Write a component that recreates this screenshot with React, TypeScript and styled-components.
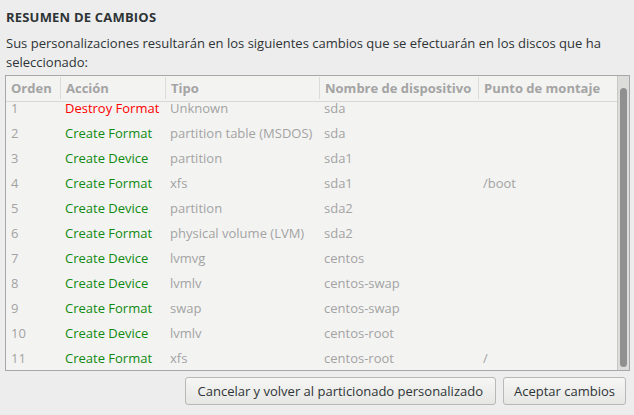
import styled, { createGlobalStyle } from "styled-components";

const GlobalStyle = createGlobalStyle`
  html, body {
    margin: 0;
    padding: 0;
    background: #ededed;
  }
  body {
    font-family: "Open Sans", "DejaVu Sans", sans-serif;
    font-size: 13px;
    color: #2e3436;
  }
`;

const Page = styled.div`
  width: 634px;
  height: 415px;
  box-sizing: border-box;
  padding: 9px 4px 0 5px;
  display: flex;
  flex-direction: column;
`;

const Title = styled.h1`
  margin: 0 0 0 1px;
  font-size: 13px;
  font-weight: 700;
  line-height: 16px;
  letter-spacing: 0.2px;
`;

const Intro = styled.p`
  margin: 9px 0 3px 1px;
  line-height: 19px;
`;

const Panel = styled.div`
  height: 294px;
  display: flex;
  border: 1px solid #a8a8a8;
  background: #f3f3f2;
`;

const TableArea = styled.div`
  flex: 1;
  display: flex;
  flex-direction: column;
  min-width: 0;
`;

const Columns = styled.div`
  display: grid;
  grid-template-columns: 54px 105px 154px 159px 1fr;
`;

const HeaderRow = styled(Columns)`
  height: 25px;
  border-bottom: 1px solid #d8d8d6;
  position: relative;
  z-index: 1;
  background: #f3f3f2;
`;

const HeadCell = styled.div<{ $first?: boolean }>`
  display: flex;
  align-items: center;
  padding-left: 5px;
  margin: 1px 0 2px;
  border-left: ${(p) => (p.$first ? "none" : "1px solid #dcdcda")};
  font-weight: 700;
  color: #a4a4a4;
  white-space: nowrap;
`;

const Body = styled.div`
  flex: 1;
  overflow: hidden;
`;

const Rows = styled.div`
  margin-top: -7px;
`;

const Row = styled(Columns)`
  height: 25px;
`;

const Cell = styled.div<{ $tone?: "red" | "green" }>`
  display: flex;
  align-items: center;
  padding-left: 5px;
  white-space: nowrap;
  color: ${(p) =>
    p.$tone === "red" ? "#ff0000" : p.$tone === "green" ? "#108a10" : "#a3a3a3"};
`;

const Track = styled.div`
  width: 12px;
  border-left: 1px solid #c8c8c6;
  background: #dcdcda;
  padding: 12px 2px 3px 2px;
  box-sizing: border-box;
  display: flex;
`;

const Thumb = styled.div`
  flex: 1;
  border-radius: 4px;
  background: #909090;
`;

const Actions = styled.div`
  display: flex;
  justify-content: flex-end;
  gap: 7px;
  padding: 6px 4px 0 0;
`;

const Button = styled.button<{ $pad?: number }>`
  height: 28px;
  padding: 0 ${(p) => p.$pad ?? 12}px;
  border: 1px solid #b8b8b6;
  border-radius: 3px;
  background: linear-gradient(#f6f6f5, #e6e6e4);
  font-family: inherit;
  font-size: 13px;
  color: #2e3436;
`;

const rows: [string, string, string, string, string][] = [
  ["1", "Destroy Format", "Unknown", "sda", ""],
  ["2", "Create Format", "partition table (MSDOS)", "sda", ""],
  ["3", "Create Device", "partition", "sda1", ""],
  ["4", "Create Format", "xfs", "sda1", "/boot"],
  ["5", "Create Device", "partition", "sda2", ""],
  ["6", "Create Format", "physical volume (LVM)", "sda2", ""],
  ["7", "Create Device", "lvmvg", "centos", ""],
  ["8", "Create Device", "lvmlv", "centos-swap", ""],
  ["9", "Create Format", "swap", "centos-swap", ""],
  ["10", "Create Device", "lvmlv", "centos-root", ""],
  ["11", "Create Format", "xfs", "centos-root", "/"],
];

export default function App() {
  return (
    <Page>
      <GlobalStyle />
      <Title>RESUMEN DE CAMBIOS</Title>
      <Intro>
        Sus personalizaciones resultarán en los siguientes cambios que se
        efectuarán en los discos que ha seleccionado:
      </Intro>
      <Panel>
        <TableArea>
          <HeaderRow>
            <HeadCell $first>Orden</HeadCell>
            <HeadCell>Acción</HeadCell>
            <HeadCell>Tipo</HeadCell>
            <HeadCell>Nombre de dispositivo</HeadCell>
            <HeadCell>Punto de montaje</HeadCell>
          </HeaderRow>
          <Body>
            <Rows>
              {rows.map(([n, action, type, dev, mount]) => (
                <Row key={n}>
                  <Cell>{n}</Cell>
                  <Cell $tone={action.startsWith("Destroy") ? "red" : "green"}>
                    {action}
                  </Cell>
                  <Cell>{type}</Cell>
                  <Cell>{dev}</Cell>
                  <Cell>{mount}</Cell>
                </Row>
              ))}
            </Rows>
          </Body>
        </TableArea>
        <Track>
          <Thumb />
        </Track>
      </Panel>
      <Actions>
        <Button>Cancelar y volver al particionado personalizado</Button>
        <Button $pad={10}>Aceptar cambios</Button>
      </Actions>
    </Page>
  );
}
